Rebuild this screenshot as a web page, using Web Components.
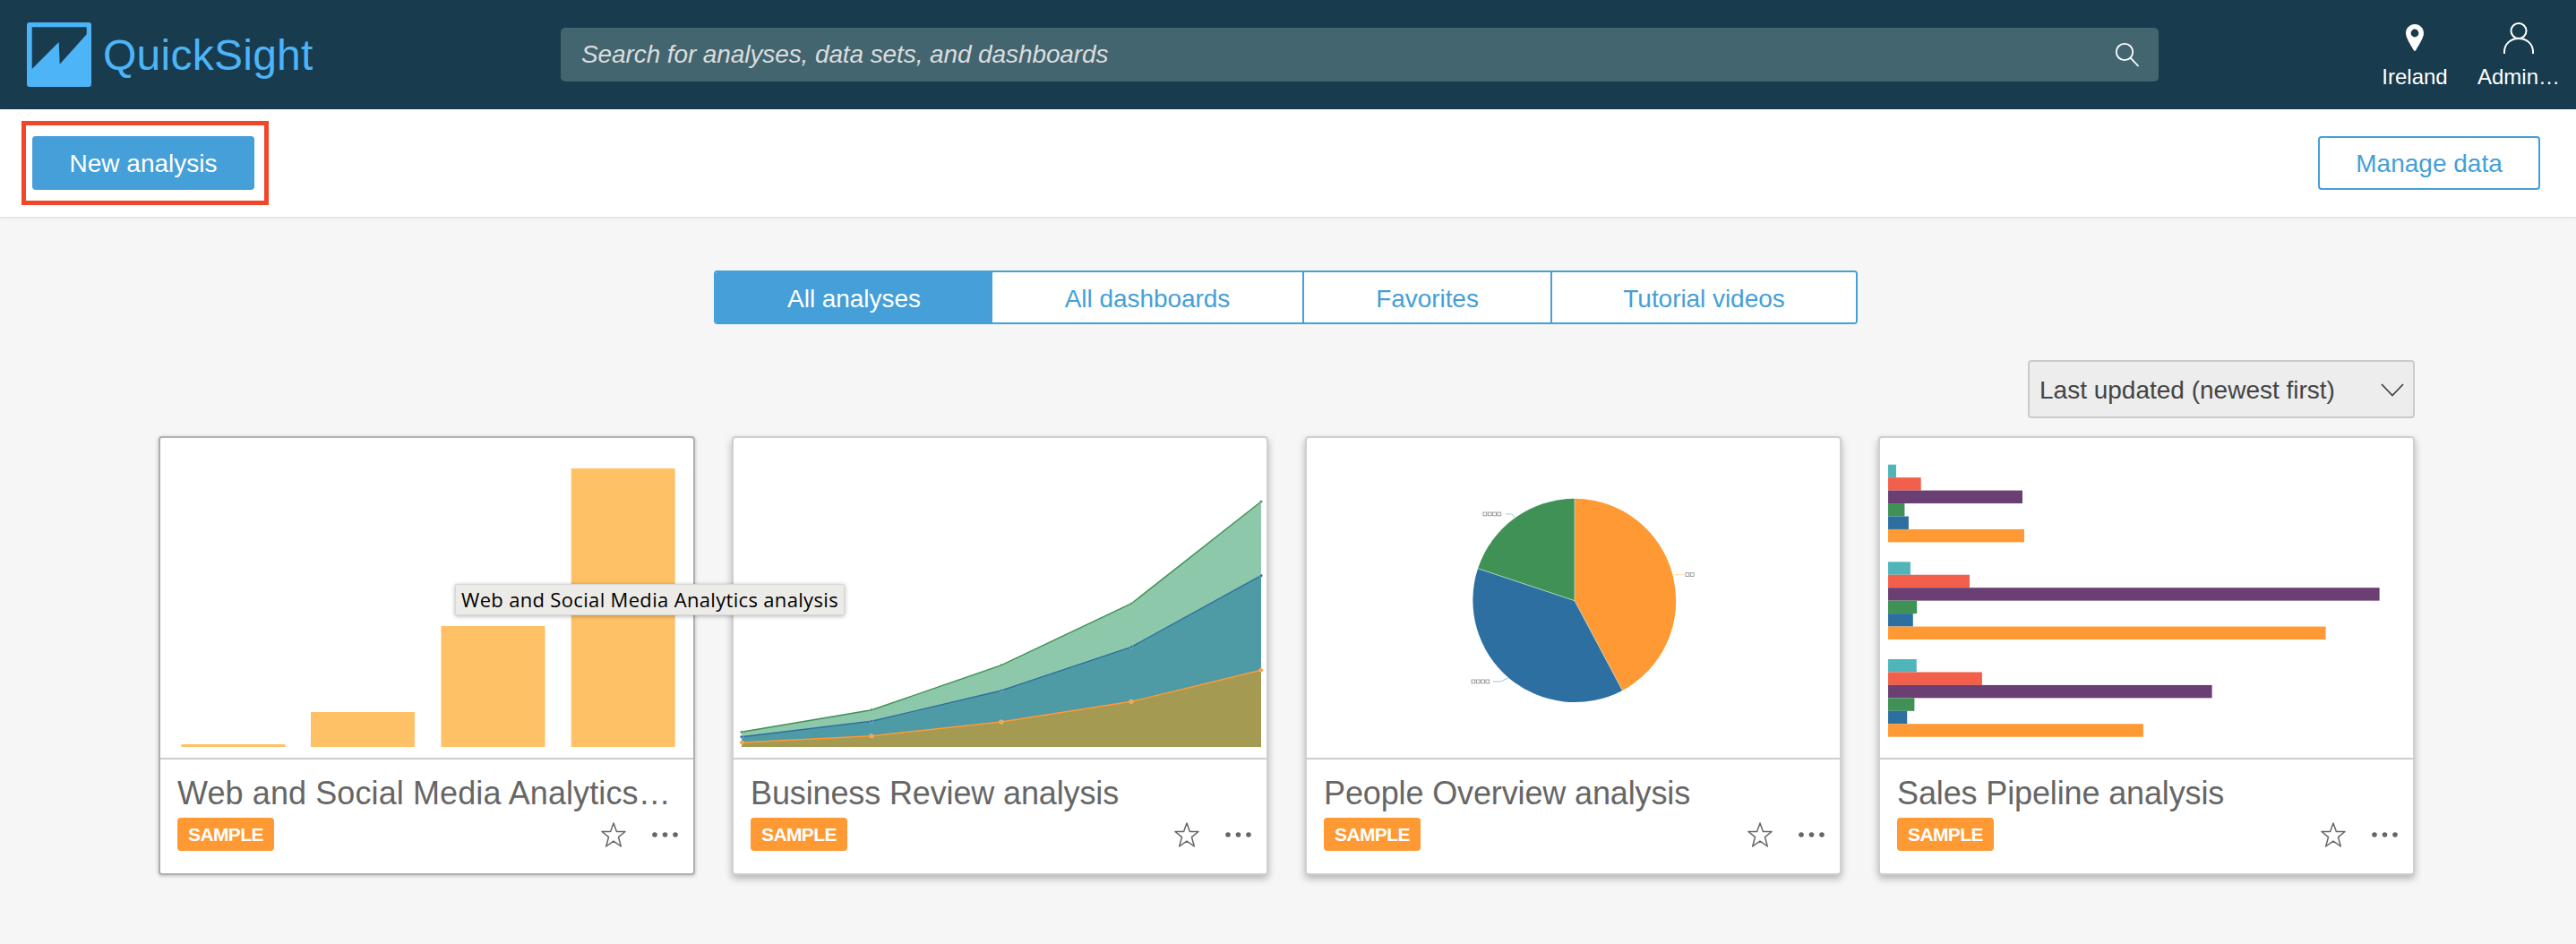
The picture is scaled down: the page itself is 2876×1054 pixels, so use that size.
<!DOCTYPE html>
<html>
<head>
<meta charset="utf-8">
<title>QuickSight</title>
<style>
    html, body {
        margin: 0;
        background: #f6f6f6;
        font-family: "Liberation Sans", Arial, sans-serif;
    }
    body {
        min-height: 1054px;
    }
</style>
</head>
<body>
<qs-header>
    <qs-search placeholder="Search for analyses, data sets, and dashboards"></qs-search>
    <qs-nav-item icon="pin">Ireland</qs-nav-item>
    <qs-nav-item icon="user">Admin…</qs-nav-item>
</qs-header>
<qs-toolbar>
    <qs-button slot="left" primary marked>New analysis</qs-button>
    <qs-button slot="right">Manage data</qs-button>
</qs-toolbar>
<qs-main>
    <qs-tabs slot="tabs">
        <qs-tab active>All analyses</qs-tab>
        <qs-tab>All dashboards</qs-tab>
        <qs-tab>Favorites</qs-tab>
        <qs-tab>Tutorial videos</qs-tab>
    </qs-tabs>
    <qs-sort slot="sort">Last updated (newest first)</qs-sort>
    <qs-card hovered tooltip="Web and Social Media Analytics analysis">
        <qs-column-chart slot="chart"></qs-column-chart>
        Web and Social Media Analytics analysis
    </qs-card>
    <qs-card>
        <qs-area-chart slot="chart"></qs-area-chart>
        Business Review analysis
    </qs-card>
    <qs-card>
        <qs-pie-chart slot="chart"></qs-pie-chart>
        People Overview analysis
    </qs-card>
    <qs-card>
        <qs-bar-chart slot="chart"></qs-bar-chart>
        Sales Pipeline analysis
    </qs-card>
</qs-main>

<script>
const BLUE = '#459fd8';
const ORANGE = '#ff9933';
const CHART_BOX = 'viewBox="0 0 593 357" width="593" height="357"';

class QsHeader extends HTMLElement {
    constructor() {
        super();
        this.attachShadow({mode: 'open'}).innerHTML = `
        <style>
            :host {
                display: flex;
                height: 122px;
                padding-left: 30px;
                background: #183b4e;
                align-items: center;
            }
            .logo {
                display: flex;
                width: 596px;
                flex: none;
                align-items: center;
                color: #4db4f7;
                font-size: 48px;
                letter-spacing: 0.25px;
            }
            svg {
                margin-right: 13px;
            }
            .nav {
                display: flex;
                margin-left: auto;
                padding-right: 6px;
                align-self: flex-start;
            }
        </style>
        <div class="logo">
            <svg width="72" height="72" viewBox="0 0 72 72">
                <rect width="72" height="72" rx="3" fill="#4db4f7"/>
                <path d="M5.7 5.3H66.7V13.3L36.7 46.7L35.7 22L5.7 52Z" fill="#183b4e"/>
            </svg>
            <span>QuickSight</span>
        </div>
        <slot></slot>
        <div class="nav"><slot name="nav"></slot></div>
        `;
        // the nav items go to the right hand slot
        this.querySelectorAll('qs-nav-item').forEach(item => item.slot = 'nav');
    }
}

class QsSearch extends HTMLElement {
    constructor() {
        super();
        this.attachShadow({mode: 'open'}).innerHTML = `
        <style>
            :host {
                display: flex;
                box-sizing: border-box;
                width: 1784px;
                height: 60px;
                padding: 0 21px 0 23px;
                border-radius: 5px;
                background: #426570;
                align-items: center;
                justify-content: space-between;
            }
            span {
                color: #dcdcdc;
                font-size: 28px;
                font-style: italic;
                letter-spacing: -0.1px;
            }
        </style>
        <span>${this.getAttribute('placeholder')}</span>
        <svg width="28" height="28" viewBox="0 0 28 28" fill="none" stroke="#fff" stroke-width="1.8">
            <circle cx="11" cy="11" r="9.2"/>
            <path d="M17.6 17.6L26.5 27"/>
        </svg>
        `;
    }
}

class QsNavItem extends HTMLElement {
    constructor() {
        super();
        const icons = {
            pin: `<svg width="20" height="30" viewBox="0 0 20 30">
                <path fill="#fff" fill-rule="evenodd" d="M10 0C4.5 0 0 4.4 0 10C0 15.5 6.4 24.5 8.8 29.2Q10 30.6 11.2 29.2C13.6 24.5 20 15.5 20 10C20 4.4 15.5 0 10 0ZM10 5.6A4.4 4.4 0 1 1 10 14.4A4.4 4.4 0 1 1 10 5.6Z"/>
            </svg>`,
            user: `<svg width="34" height="35" viewBox="0 0 34 35" fill="none" stroke="#fff" stroke-width="2">
                <circle cx="17" cy="9.5" r="8.5"/>
                <path d="M1 35V33C1 24 8 18 17 18C26 18 33 24 33 33V35"/>
            </svg>`
        };
        this.attachShadow({mode: 'open'}).innerHTML = `
        <style>
            :host {
                display: flex;
                width: 116px;
                padding-top: 24px;
                flex-direction: column;
                align-items: center;
                color: #fff;
                font-size: 24px;
                line-height: 28px;
            }
            .icon {
                display: flex;
                height: 36px;
                margin-bottom: 12px;
                align-items: center;
            }
        </style>
        <div class="icon">${icons[this.getAttribute('icon')]}</div>
        <slot></slot>
        `;
    }
}

class QsToolbar extends HTMLElement {
    constructor() {
        super();
        this.attachShadow({mode: 'open'}).innerHTML = `
        <style>
            :host {
                display: flex;
                height: 120px;
                padding: 0 40px 0 36px;
                background: #fff;
                box-shadow: 0 1px 3px rgba(0, 0, 0, .12);
                align-items: center;
                justify-content: space-between;
            }
        </style>
        <slot name="left"></slot>
        <slot name="right"></slot>
        `;
    }
}

class QsButton extends HTMLElement {
    constructor() {
        super();
        const primary = this.hasAttribute('primary');
        this.attachShadow({mode: 'open'}).innerHTML = `
        <style>
            :host {
                display: flex;
                position: relative;
                box-sizing: border-box;
                width: 248px;
                height: 60px;
                padding-top: 2px;
                border: 2px solid ${BLUE};
                border-radius: 4px;
                background: ${primary ? BLUE : '#fff'};
                color: ${primary ? '#fff' : BLUE};
                font-size: 28px;
                align-items: center;
                justify-content: center;
            }
            /* red annotation drawn over the screenshot */
            .mark {
                position: absolute;
                top: -19px;
                left: -14px;
                right: -18px;
                bottom: -19px;
                border: 5px solid #f1462a;
            }
        </style>
        <slot></slot>
        ${this.hasAttribute('marked') ? '<div class="mark"></div>' : ''}
        `;
    }
}

class QsMain extends HTMLElement {
    constructor() {
        super();
        this.attachShadow({mode: 'open'}).innerHTML = `
        <style>
            :host {
                display: block;
                padding: 60px 180px 0 177px;
            }
            .tabs {
                display: flex;
                margin-right: 2px;
                justify-content: center;
            }
            .sort {
                display: flex;
                margin-top: 40px;
                justify-content: flex-end;
            }
            .cards {
                display: grid;
                margin-top: 20px;
                grid-template-columns: repeat(4, 599px);
                column-gap: 41px;
            }
        </style>
        <div class="tabs"><slot name="tabs"></slot></div>
        <div class="sort"><slot name="sort"></slot></div>
        <div class="cards"><slot></slot></div>
        `;
    }
}

class QsTabs extends HTMLElement {
    constructor() {
        super();
        this.attachShadow({mode: 'open'}).innerHTML = `
        <style>
            :host {
                display: grid;
                box-sizing: border-box;
                height: 60px;
                border: 2px solid ${BLUE};
                border-radius: 4px;
                background: #fff;
                grid-template-columns: 309px 346px 277px 341px;
                overflow: hidden;
            }
        </style>
        <slot></slot>
        `;
    }
}

class QsTab extends HTMLElement {
    constructor() {
        super();
        const active = this.hasAttribute('active');
        this.attachShadow({mode: 'open'}).innerHTML = `
        <style>
            :host {
                display: flex;
                box-sizing: border-box;
                padding-top: 3px;
                background: ${active ? BLUE : '#fff'};
                color: ${active ? '#fff' : BLUE};
                font-size: 28px;
                letter-spacing: -0.05px;
                align-items: center;
                justify-content: center;
            }
            :host(:nth-child(n+3)) {
                border-left: 2px solid ${BLUE};
            }
        </style>
        <slot></slot>
        `;
    }
}

class QsSort extends HTMLElement {
    constructor() {
        super();
        this.attachShadow({mode: 'open'}).innerHTML = `
        <style>
            :host {
                display: flex;
                box-sizing: border-box;
                width: 432px;
                height: 65px;
                padding: 2px 10px 0 11px;
                border: 2px solid #cbcbcb;
                border-radius: 4px;
                background: #ededed;
                color: #444;
                font-size: 28px;
                align-items: center;
                justify-content: space-between;
            }
        </style>
        <slot></slot>
        <svg width="26" height="15" viewBox="0 0 26 15" fill="none" stroke="#444" stroke-width="1.8">
            <path d="M1 1L13 13.5L25 1"/>
        </svg>
        `;
    }
}

class QsCard extends HTMLElement {
    constructor() {
        super();
        const tooltip = this.getAttribute('tooltip');
        this.attachShadow({mode: 'open'}).innerHTML = `
        <style>
            :host {
                display: block;
                position: relative;
                box-sizing: border-box;
                height: 490px;
                border: 2px solid #cfcfcf;
                border-radius: 4px;
                background: #fff;
                box-shadow: 0 4px 8px rgba(0, 0, 0, .28);
            }
            :host([hovered]) {
                border-color: #b0b0b0;
                box-shadow: 0 1px 4px rgba(0, 0, 0, .25);
            }
            .chart {
                height: 357px;
                border-bottom: 2px solid #cdcdcd;
            }
            .info {
                padding: 17px 17px 0 19px;
            }
            .name {
                height: 42px;
                margin-right: 6px;
                color: #666;
                font-size: 36px;
                line-height: 42px;
                letter-spacing: -0.13px;
                white-space: nowrap;
                overflow: hidden;
                text-overflow: ellipsis;
            }
            :host([hovered]) .name {
                letter-spacing: 0.1px;
            }
            .row {
                display: flex;
                margin-top: 6px;
                align-items: center;
            }
            .badge {
                padding: 0 12px;
                border-radius: 4px;
                background: ${ORANGE};
                color: #fff;
                font-size: 21px;
                font-weight: bold;
                letter-spacing: -0.6px;
                line-height: 37px;
            }
            .star {
                margin-top: 1px;
                margin-left: auto;
                margin-right: 29px;
            }
            /* tooltip hangs over the next card */
            .tooltip {
                position: absolute;
                top: 163px;
                left: 329px;
                padding: 0 6px;
                border: 1px solid #d8d6d3;
                border-radius: 2px;
                background: #edebe8;
                box-shadow: 0 1px 5px rgba(0, 0, 0, .3);
                color: #000;
                font-family: "Open Sans", sans-serif;
                font-size: 22px;
                letter-spacing: 0.33px;
                line-height: 33px;
                white-space: nowrap;
                z-index: 2;
            }
        </style>
        <div class="chart"><slot name="chart"></slot></div>
        <div class="info">
            <div class="name"><slot></slot></div>
            <div class="row">
                <span class="badge">SAMPLE</span>
                <svg class="star" width="28" height="28" viewBox="0 0 28 28" fill="none" stroke="#666" stroke-width="1.5" stroke-linejoin="round">
                    <path d="M14 1L17.4 10.5H27L19.5 16.7L22.3 27L14 21.2L5.7 27L8.5 16.7L1 10.5H10.6Z"/>
                </svg>
                <svg width="29" height="6" viewBox="0 0 29 6" fill="#666">
                    <circle cx="3" cy="3" r="2.8"/>
                    <circle cx="14.5" cy="3" r="2.8"/>
                    <circle cx="26" cy="3" r="2.8"/>
                </svg>
            </div>
        </div>
        ${tooltip ? `<div class="tooltip">${tooltip}</div>` : ''}
        `;
    }
}

class QsColumnChart extends HTMLElement {
    constructor() {
        super();
        const columns = [[23.5, 3], [168, 39], [313.5, 135], [458.7, 311]];
        const rects = columns.map(([x, h]) =>
            `<rect x="${x}" y="${345 - h}" width="116" height="${h}"/>`).join('');
        this.attachShadow({mode: 'open'}).innerHTML = `
        <style>:host { display: block; } svg { display: block; }</style>
        <svg ${CHART_BOX} fill="#ffc166">${rects}</svg>
        `;
    }
}

class QsAreaChart extends HTMLElement {
    constructor() {
        super();
        const xs = [9, 154, 299, 444, 589];
        const green = [328.3, 303.7, 253.7, 185, 71];
        const blue = [333.7, 316.3, 282, 233.3, 153.7];
        const orange = [340, 332.7, 317, 294.3, 259.3];
        const line = ys => ys.map((y, i) => `${xs[i]},${y}`).join(' ');
        const band = (top, bottom) => line(top) + ' ' +
            (bottom ? bottom.map((y, i) => `${xs[i]},${y}`).reverse().join(' ') : '589,345 9,345');
        const series = (ys, color, r) => `
            <polyline points="${line(ys)}" fill="none" stroke="${color}" stroke-width="1.4"/>
            ${ys.map((y, i) => `<circle cx="${xs[i]}" cy="${y}" r="${r}" fill="${color}" stroke="#fff" stroke-opacity=".45" stroke-width=".7"/>`).join('')}`;
        this.attachShadow({mode: 'open'}).innerHTML = `
        <style>:host { display: block; } svg { display: block; }</style>
        <svg ${CHART_BOX}>
            <polygon points="${band(green, blue)}" fill="#8cc8a9"/>
            <polygon points="${band(blue, orange)}" fill="#4e9ba6"/>
            <polygon points="${band(orange)}" fill="#a59a52"/>
            ${series(green, '#3f9156', 1.6)}
            ${series(blue, '#2e6fa1', 1.8)}
            ${series(orange, ORANGE, 2.2)}
        </svg>
        `;
    }
}

class QsPieChart extends HTMLElement {
    constructor() {
        super();
        // empty boxes, the labels of the thumbnail have no readable glyphs
        const boxes = (x, y, count) => {
            let out = '';
            for (let i = 0; i < count; i++) {
                out += `<rect x="${x + i * 5.3}" y="${y - 2}" width="3.8" height="3.8"/>`;
            }
            return out;
        };
        this.attachShadow({mode: 'open'}).innerHTML = `
        <style>:host { display: block; } svg { display: block; }</style>
        <svg ${CHART_BOX}>
            <path d="M299 181.7V67.7A114 114 0 0 1 352.4 282Z" fill="${ORANGE}"/>
            <path d="M299 181.7L352.4 282A114 114 0 0 1 191 145.7Z" fill="#2e6fa1"/>
            <path d="M299 181.7L191 145.7A114 114 0 0 1 299 67.7Z" fill="#3f9156"/>
            <path d="M299 181.7V67.7M299 181.7L352.4 282M299 181.7L191 145.7" stroke="#cfe5da" stroke-width=".7" fill="none"/>
            <path d="M222 85H229L233 90" stroke="#9fd6c4" fill="none"/>
            <path d="M409 152.7H421" stroke="#ffdca8" fill="none"/>
            <path d="M208 272H216L225 268" stroke="#9cc7dd" fill="none"/>
            <g fill="none" stroke="#888" stroke-width=".8">
                ${boxes(197, 85, 4)}
                ${boxes(423, 152.7, 2)}
                ${boxes(184, 272, 4)}
            </g>
        </svg>
        `;
    }
}

class QsBarChart extends HTMLElement {
    constructor() {
        super();
        const colors = ['#50b5bb', '#f25f4a', '#6b3f73', '#3f9156', '#2e6fa1', ORANGE];
        const groups = [
            [29.7, [9, 36.7, 150, 18.4, 22.9, 152]],
            [138.3, [24.9, 91, 548.6, 32.2, 27.8, 488.6]],
            [247, [31.8, 104.9, 361.6, 29.4, 21.2, 284.9]]
        ];
        let rects = '';
        groups.forEach(([top, widths]) => {
            widths.forEach((w, i) => {
                rects += `<rect x="9" y="${top + i * 14.45}" width="${w}" height="14.45" fill="${colors[i]}"/>`;
            });
        });
        this.attachShadow({mode: 'open'}).innerHTML = `
        <style>:host { display: block; } svg { display: block; }</style>
        <svg ${CHART_BOX}>${rects}</svg>
        `;
    }
}

window.customElements.define('qs-header', QsHeader);
window.customElements.define('qs-search', QsSearch);
window.customElements.define('qs-nav-item', QsNavItem);
window.customElements.define('qs-toolbar', QsToolbar);
window.customElements.define('qs-button', QsButton);
window.customElements.define('qs-main', QsMain);
window.customElements.define('qs-tabs', QsTabs);
window.customElements.define('qs-tab', QsTab);
window.customElements.define('qs-sort', QsSort);
window.customElements.define('qs-card', QsCard);
window.customElements.define('qs-column-chart', QsColumnChart);
window.customElements.define('qs-area-chart', QsAreaChart);
window.customElements.define('qs-pie-chart', QsPieChart);
window.customElements.define('qs-bar-chart', QsBarChart);
</script>
</body>
</html>
